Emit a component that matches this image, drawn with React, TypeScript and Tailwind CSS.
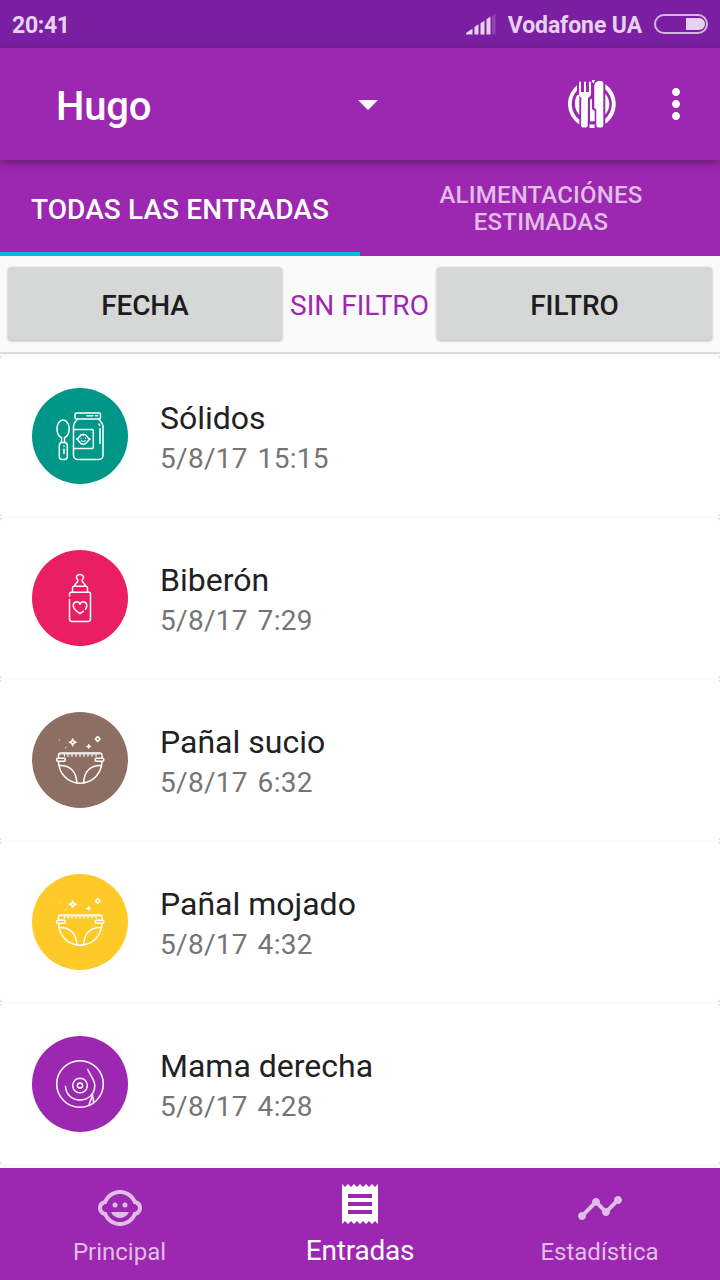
import type { ReactNode } from "react";
import { MdArrowDropDown, MdChildCare, MdMoreVert, MdReceipt, MdTimeline } from "react-icons/md";

function SignalIcon() {
  return (
    <svg width="30" height="21" viewBox="0 0 30 21" fill="#e6d2ee">
      <path d="M0 20.5V19l6.5-4.5v6zM8.5 20.5v-7.5l4-2.7v10.2zM14.5 20.5V9.3l4-2.7v13.9zM20.5 20.5V5.3l4-2.7v17.9z" />
      <path d="M26 20.5V2l3.500-2v20.500z" opacity="0.2" />
    </svg>
  );
}

function CutleryIcon() {
  return (
    <svg width="48" height="48" viewBox="0 0 48 48" fill="white">
      <path d="M9 5.3A24 24 0 0 0 11.3 44.4V39.7A20 20 0 0 1 9 10.5zM11.3 14.5v20.5c-1.8-2.5-4.4-6-4.4-11.5 0-3 .9-6 2.2-8.2zM37.3 4.2a24 24 0 0 1 0 39.6v-5a20 20 0 0 0 0-29.6zM37.3 13.7c2.5 3 4 6.4 4 10.3s-1.5 7.7-4 10.7z" />
      <path d="M11 2.5a1 1 0 0 1 2 0V12h3V2.5a1 1 0 0 1 2 0V12h3V2.5a1 1 0 0 1 2 0V13c0 2.5-.8 4-3 4.7l-.3 28a2 2 0 0 1-2 1.800h-2.700a2 2 0 0 1-2-1.800l.3-28C11.500 17 11 15.500 11 13z" />
      <path d="M35.300 4v41.500a2 2 0 0 1-2 2h-3a2 2 0 0 1-2-2V29.500l-2-1.500V6.500c0-3.200 2-5.500 5-5.500h2c1.300 0 2 1.300 2 3z" />
      <path d="M24 0h3l-1.300 3.300L24 2zM22 20l2-1.500V29l2.700 2V41.300H22zM21.500 44.500h5V48h-5z" />
    </svg>
  );
}

function LineArt({ children }: { children: ReactNode }) {
  return (
    <svg
      width="96"
      height="96"
      viewBox="0 0 96 96"
      fill="none"
      stroke="white"
      strokeWidth="1.5"
      strokeLinecap="round"
      strokeLinejoin="round"
    >
      {children}
    </svg>
  );
}

function JarArt() {
  return (
    <LineArt>
      <rect x="43" y="25" width="25.500" height="6" rx="1.500" />
      <path d="M55 27.800h6M63.500 27.800h2" />
      <path d="M45 31c0 2-3.500 3-3.500 7v29.500a4 4 0 0 0 4 4h21.500a4 4 0 0 0 4-4V38c0-4-4-5-4-7" />
      <path d="M41.500 41.500h18.800a1 1 0 0 1 1 1v17a1 1 0 0 1-1 1H41.500M68 40.500v15M67 36l.6 1.500" />
      <path d="M44.500 51q2-.5 2.800-2.200 1.300-2.500 4-2.500t4 2.500q.8 1.700 2.700 2.200-1.500 1.200-2.500 2.500-1.500 2.700-4.200 2.700t-4.200-2.700q-1-1.800-2.600-2.500z" />
      <path d="M49 50v.2M53.500 50v.2M49.300 52.800q2 1.400 4 0M51.300 46.500v1" strokeWidth="1.2" />
      <path d="M29.500 54v-4.200c-2.700-1.300-4.500-5-4.500-9.300 0-4.500 2.500-8.500 6-8.500s6.200 4 6.200 8.500c0 4.300-2 8-4.700 9.300V54" />
      <rect x="27.300" y="54.500" width="8" height="17" rx="3" />
      <path d="M32 58v.2M32 61v4.500" />
    </LineArt>
  );
}

function BottleArt() {
  return (
    <LineArt>
      <path d="M42.500 36c.5-2.500 3.500-3.500 3.500-5.500 0-1-1.500-1.600-1.500-3.100a3.500 2.900 0 0 1 7 0c0 1.500-1.500 2.100-1.500 3.100 0 2 3 3 3.500 5.500" />
      <path d="M40.500 42v-4a1.700 1.700 0 0 1 1.700-1.700h11.600a1.700 1.700 0 0 1 1.700 1.700v4" />
      <path d="M37.500 46v-1.800a2 2 0 0 1 2-2h17a2 2 0 0 1 2 2V69a2.500 2.500 0 0 1-2.500 2.500H40a2.500 2.500 0 0 1-2.500-2.500V49.500" />
      <path d="M51.500 61.200 48 63.700q-6.800-4.600-6.800-8.200a3.500 3.500 0 0 1 6.800-1.300 3.500 3.500 0 0 1 6.800 1.300q0 2-1.400 3.700" />
    </LineArt>
  );
}

function DiaperArt() {
  return (
    <LineArt>
      <path d="M26.500 46v-2.500q0-2.500 2.500-2.500h38.500q2.500 0 2.500 2.500V46" />
      <path d="M28.500 42h39.500" strokeWidth="0.8" />
      <path
        d="M32.500 42.500v1.800M36 42.500v1.800M40 42.500v1.800M44 42.500v1.800M48 42.500v1.800M52 42.500v1.800M56 42.500v1.800M60 42.500v1.800M64 42.500v1.800"
        strokeWidth="1.2"
      />
      <rect x="24.700" y="46.200" width="8.500" height="3" rx="1" />
      <rect x="63.200" y="46.200" width="8.500" height="3" rx="1" />
      <path d="M26.500 49.500C27 62 36 71.300 48.200 71.300S69.400 62 70 49.500" />
      <path d="M27 53.500c11-.5 17.500 6 17.800 17.500M69.500 53.500c-11-.5-17.500 6-17.800 17.500" />
      <path d="M40.700 27q.3 3 3.300 3.300-3 .3-3.300 3.300-.3-3-3.300-3.300 3-.3 3.300-3.300zM56.700 32.700v3.400M55 34.400h3.400" />
      <path d="M65.700 24.500 68 27l-2.300 2.500L63.400 27z" />
      <path d="M27.300 28v.01M33.700 35.700v.01" strokeWidth="1.2" />
    </LineArt>
  );
}

function BreastArt() {
  return (
    <LineArt>
      <circle cx="48" cy="48" r="23.300" />
      <circle cx="48" cy="49.500" r="7.300" />
      <circle cx="48" cy="49.500" r="2.600" />
      <path d="M33.500 50.500C34 58.500 40 64 48 64s14.800-6 14.800-14.500c0-6-4.300-9.500-7-16" />
      <path d="M60.500 58.500c-.3 4-2.500 6-3.300 10M60.500 58.500c0 4 1.500 4.500 1 7.500" />
    </LineArt>
  );
}

const entries = [
  { title: "Sólidos", date: "5/8/17 15:15", color: "bg-[#009688]", art: <JarArt /> },
  { title: "Biberón", date: "5/8/17 7:29", color: "bg-[#e91e63]", art: <BottleArt /> },
  { title: "Pañal sucio", date: "5/8/17 6:32", color: "bg-[#8d6e63]", art: <DiaperArt /> },
  { title: "Pañal mojado", date: "5/8/17 4:32", color: "bg-[#ffca28]", art: <DiaperArt /> },
  { title: "Mama derecha", date: "5/8/17 4:28", color: "bg-[#9c27b0]", art: <BreastArt /> },
];

function StatusBar() {
  return (
    <div className="flex h-12 shrink-0 items-center bg-[#7b1fa2] px-3 text-[23px] font-bold text-[#e6d2ee]">
      <span className="grow pt-1 tracking-[-0.3px]">20:41</span>
      <SignalIcon />
      <span className="ml-3 pt-1 tracking-[-0.1px]">Vodafone UA</span>
      <span className="ml-3 flex h-5 w-[54px] items-center justify-end rounded-full border-2 border-[#d3b5df] pr-px">
        <span className="h-3 w-[19px] rounded-r-full bg-[#e6d2ee]" />
      </span>
    </div>
  );
}

function Toolbar() {
  return (
    <header className="relative flex h-28 shrink-0 items-center bg-[#9c27b0] pr-5 pl-14 text-white shadow-[0_3px_8px_rgba(0,0,0,0.32)]">
      <button className="flex w-[336px] items-center justify-between text-left">
        <span className="pt-1.5 text-[40px] leading-none font-medium tracking-[-0.2px]">Hugo</span>
        <MdArrowDropDown size={48} />
      </button>
      <span className="grow" />
      <CutleryIcon />
      <MdMoreVert size={48} className="ml-9" />
    </header>
  );
}

function Tabs() {
  return (
    <div className="flex h-24 shrink-0 bg-[#9c27b0] text-center font-medium">
      <div className="flex w-1/2 items-center justify-center border-b-4 border-[#00bcd4] pt-2 text-[28px] tracking-[0.1px] text-white">
        TODAS LAS ENTRADAS
      </div>
      <div className="flex w-1/2 items-center justify-center pt-0.5 pr-[63px] pl-[65px] text-2xl leading-[27px] tracking-[0.2px] text-[#e1bee7]">
        ALIMENTACIÓNES ESTIMADAS
      </div>
    </div>
  );
}

function FilterBar() {
  return (
    <div className="flex h-[98px] shrink-0 items-start justify-between border-b-2 border-[#dcdcdc] px-2 pt-[11px] text-[28px] text-[#1d1d1d]">
      <button className="h-[73px] w-[274px] rounded bg-[#d6d7d7] pt-1 font-medium tracking-[-0.1px] shadow-[0_1px_3px_rgba(0,0,0,0.3)]">
        FECHA
      </button>
      <span className="pt-[18px] text-[#9c27b0]">SIN FILTRO</span>
      <button className="h-[73px] w-[275px] rounded bg-[#d6d7d7] pt-1 font-medium tracking-[-0.1px] shadow-[0_1px_3px_rgba(0,0,0,0.3)]">
        FILTRO
      </button>
    </div>
  );
}

function BottomNav() {
  return (
    <nav className="flex h-28 shrink-0 bg-[#9c27b0] text-2xl text-[#e1bee7]">
      <div className="flex w-60 flex-col items-center pt-4">
        <MdChildCare size={48} />
        <span className="mt-1 mr-px leading-8">Principal</span>
      </div>
      <div className="flex w-60 flex-col items-center pt-3 text-[28px] text-white">
        <MdReceipt size={48} />
        <span className="mt-[7px] leading-8 tracking-[-0.2px]">Entradas</span>
      </div>
      <div className="flex w-60 flex-col items-center pt-4">
        <MdTimeline size={48} />
        <span className="mt-1 mr-px leading-8">Estadística</span>
      </div>
    </nav>
  );
}

export default function App() {
  return (
    <div className="flex h-[1280px] w-[720px] flex-col overflow-hidden bg-[#fafafa] font-[Roboto,sans-serif]">
      <StatusBar />
      <Toolbar />
      <Tabs />
      <FilterBar />
      <main className="flex grow flex-col gap-0.5 pt-0.5">
        {entries.map((entry) => (
          <div key={entry.title} className="bg-[#dcdcdc]">
            <div className="flex h-40 items-center gap-8 rounded bg-white px-8">
              <div className={`size-24 rounded-full ${entry.color}`}>{entry.art}</div>
              <div className="pt-1">
                <div className="text-[32px] leading-10 text-[#212121]">{entry.title}</div>
                <div className="pt-px text-[28px] leading-[39px] tracking-[0.3px] text-[#757575] [word-spacing:2.5px]">
                  {entry.date}
                </div>
              </div>
            </div>
          </div>
        ))}
      </main>
      <BottomNav />
    </div>
  );
}
